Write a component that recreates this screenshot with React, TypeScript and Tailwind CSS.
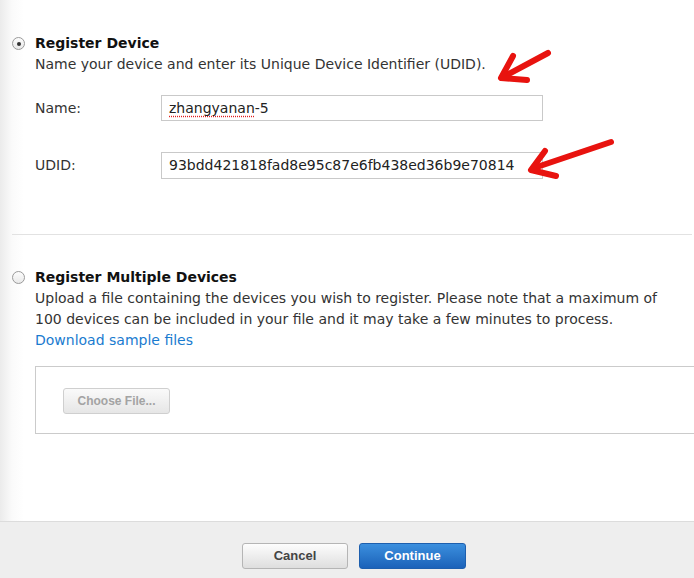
const Radio = ({ checked }: { checked?: boolean }) => (
	<span className="mt-[4px] flex h-[13px] w-[13px] shrink-0 items-center justify-center rounded-full border border-[#9a9a9a] bg-[linear-gradient(#fdfdfd,#e9e9e9)]">
		{checked && <span className="h-[4px] w-[4px] rounded-full bg-[#333]" />}
	</span>
);

const Arrows = () => (
	<svg className="pointer-events-none absolute left-0 top-0" width={694} height={578}>
		<g stroke="#e8130f" strokeWidth={6} strokeLinecap="round" strokeLinejoin="round" fill="none">
			<path d="M548 53 L503 77" />
			<path d="M513 56 L501 78 L527 80" />
			<path d="M611 142 L534 168" />
			<path d="M545 151 L531 170 L556 176" />
		</g>
	</svg>
);

export default function App() {
	return (
		<div className="relative flex h-[578px] w-[694px] flex-col overflow-hidden bg-white font-['DejaVu_Sans',sans-serif] text-[14px] text-[#333]">
			<div className="flex-1 bg-[linear-gradient(to_right,#ebebeb,#fafafa_12px,#fff_24px)] pl-[12px] pr-[2px] pt-[33px]">
				<div className="flex gap-[10px]">
					<Radio checked />
					<div className="flex-1 leading-[21px]">
						<div className="font-bold text-[#111]">Register Device</div>
						<div>Name your device and enter its Unique Device Identifier (UDID).</div>

						<div className="mt-[20px] flex items-center">
							<span className="w-[126px]">Name:</span>
							<div className="flex h-[26px] w-[382px] items-center border border-[#c9c9c9] px-[7px] text-[#222]">
								<span className="underline decoration-[#e02020] decoration-dotted underline-offset-[3px]">zhangyanan</span>-5
							</div>
						</div>
						<div className="mt-[31px] flex items-center">
							<span className="w-[126px]">UDID:</span>
							<div className="flex h-[27px] w-[382px] items-center border border-[#c9c9c9] px-[7px] text-[#222]">
								93bdd421818fad8e95c87e6fb438ed36b9e70814
							</div>
						</div>
					</div>
				</div>

				<div className="mt-[55px] h-px bg-[#e2e2e2]" />

				<div className="mt-[32px] flex gap-[10px]">
					<Radio />
					<div className="flex-1 leading-[21px]">
						<div className="font-bold text-[#111]">Register Multiple Devices</div>
						<div>
							Upload a file containing the devices you wish to register. Please note that a maximum of
							<br />
							100 devices can be included in your file and it may take a few minutes to process.
						</div>
						<a className="text-[#1a7bcf]">Download sample files</a>

						<div className="-mr-[10px] mt-[15px] h-[68px] border border-[#cbcbcb] pl-[27px] pt-[21px]">
							<button className="h-[26px] w-[107px] rounded-[3px] border border-[#cfcfcf] bg-[linear-gradient(#fafafa,#e6e6e6)] font-['Liberation_Sans',sans-serif] text-[12px] font-bold text-[#a3a3a3]">
								Choose File...
							</button>
						</div>
					</div>
				</div>
			</div>

			<div className="flex h-[57px] justify-center gap-[11px] border-t border-[#dcdcdc] bg-[#eeeeee] pl-[14px] pt-[21px] font-['Liberation_Sans',sans-serif] text-[13px] font-bold">
				<button className="h-[26px] w-[106px] rounded-[3px] border border-[#b5b5b5] bg-[linear-gradient(#fdfdfd,#dedede)] text-[#444]">
					Cancel
				</button>
				<button className="h-[26px] w-[107px] rounded-[3px] border border-[#1d5fae] bg-[linear-gradient(#3b8fde,#1b62b9)] text-white">
					Continue
				</button>
			</div>

			<Arrows />
		</div>
	);
}
